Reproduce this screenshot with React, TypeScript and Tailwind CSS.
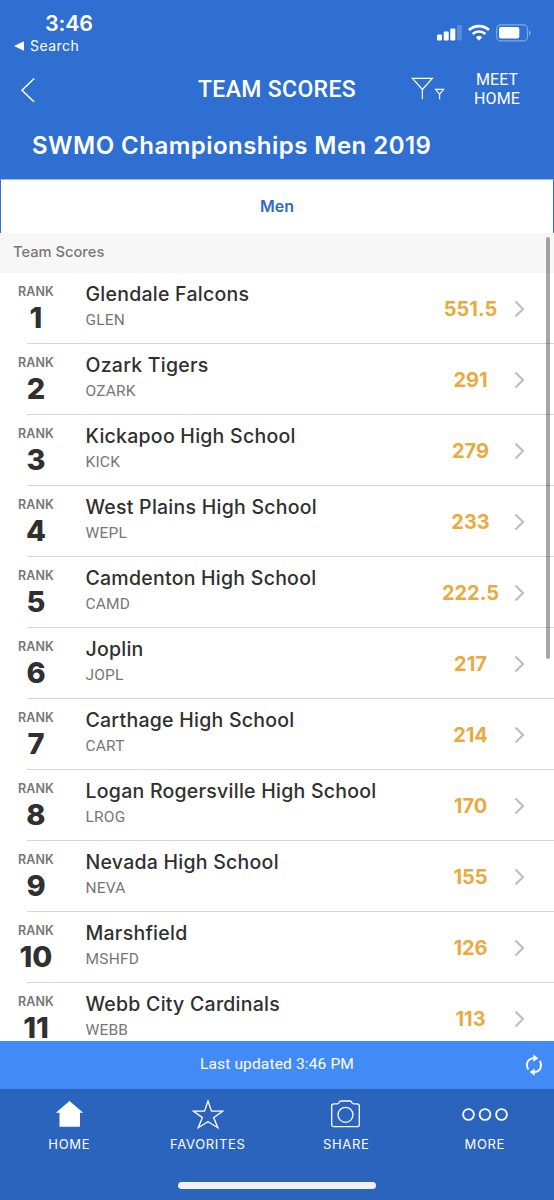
const teams = [
  { rank: 1, name: "Glendale Falcons", code: "GLEN", score: "551.5" },
  { rank: 2, name: "Ozark Tigers", code: "OZARK", score: "291" },
  { rank: 3, name: "Kickapoo High School", code: "KICK", score: "279" },
  { rank: 4, name: "West Plains High School", code: "WEPL", score: "233" },
  { rank: 5, name: "Camdenton High School", code: "CAMD", score: "222.5" },
  { rank: 6, name: "Joplin", code: "JOPL", score: "217" },
  { rank: 7, name: "Carthage High School", code: "CART", score: "214" },
  { rank: 8, name: "Logan Rogersville High School", code: "LROG", score: "170" },
  { rank: 9, name: "Nevada High School", code: "NEVA", score: "155" },
  { rank: 10, name: "Marshfield", code: "MSHFD", score: "126" },
  { rank: 11, name: "Webb City Cardinals", code: "WEBB", score: "113" },
];

const StatusIcons = () => (
  <svg width="94" height="18" viewBox="0 0 94 18" fill="none">
    <rect x="0" y="10.5" width="5" height="6" rx="1" fill="#fff" />
    <rect x="6.7" y="7.5" width="5" height="9" rx="1" fill="#fff" />
    <rect x="13.3" y="4.5" width="5" height="12" rx="1" fill="#fff" />
    <rect x="20" y="1" width="5" height="15.5" rx="1" fill="#fff" opacity="0.2" />
    <path d="M32 6.1a14.4 14.4 0 0 1 20 0" stroke="#fff" strokeWidth="2.8" />
    <path d="M35.7 10a9 9 0 0 1 12.6 0" stroke="#fff" strokeWidth="2.5" />
    <path d="M38.7 13.2a4.8 4.8 0 0 1 6.6 0L42 16.8z" fill="#fff" />
    <rect x="59.7" y="0.9" width="30.8" height="16" rx="4" stroke="#fff" strokeOpacity="0.4" strokeWidth="1.2" />
    <rect x="62" y="3" width="20.3" height="11.5" rx="2" fill="#fff" />
    <path d="M92 6.5c2.4.8 2.4 4.2 0 5z" fill="#fff" opacity="0.4" />
  </svg>
);

const Header = () => (
  <header className="h-[179px] shrink-0 bg-[#2e6fd1] text-white">
    <div className="flex h-[58px] justify-between pr-[23px] pl-[14px]">
      <div className="pt-[11px]">
        <p className="pl-[31px] font-[Inter,sans-serif] text-[21.5px] leading-6 font-semibold tracking-[-0.2px]">3:46</p>
        <div className="mt-0.5 flex items-center gap-[6px]">
          <svg width="10" height="10" viewBox="0 0 10 10" fill="#fff">
            <path d="M0 5 10 .2v9.6z" />
          </svg>
          <span className="font-[Inter,sans-serif] text-sm leading-[18px] tracking-[0.45px]">Search</span>
        </div>
      </div>
      <div className="pt-6">
        <StatusIcons />
      </div>
    </div>

    <div className="grid h-[61px] grid-cols-[1fr_auto_1fr] items-center">
      <svg className="mt-0.5 ml-5" width="16" height="26" viewBox="0 0 16 26" fill="none" stroke="#fff" strokeWidth="1.5">
        <path d="M14.2 1.5 2 13.3 14.2 25" />
      </svg>
      <h1 className="mt-0.5 font-[Roboto,sans-serif] text-[23px] leading-7 font-medium tracking-[0.35px]">TEAM SCORES</h1>
      <div className="flex items-center justify-end gap-[29px] pr-[34px]">
        <svg width="34" height="24" viewBox="0 0 34 24" fill="none" stroke="#fff" strokeWidth="1.2">
          <path d="M1.5 1.3h19.8l-9.9 11.2zM11.4 12v10" />
          <path d="M24.7 12.3h7.8l-3.9 5zM28.6 17v5.2" />
        </svg>
        <div className="mt-px text-center font-[Roboto,sans-serif] text-base leading-[19px] tracking-[0.1px]">
          <p>MEET</p>
          <p>HOME</p>
        </div>
      </div>
    </div>

    <h2 className="pt-3 pl-8 font-[Inter,sans-serif] text-2xl leading-[30px] font-semibold tracking-[0.47px]">SWMO Championships Men 2019</h2>
  </header>
);

const TeamRow = ({ rank, name, code, score }: (typeof teams)[number]) => (
  <li className="shrink-0">
    <div className="flex h-[70px]">
      <div className="w-[72px] shrink-0 pt-[11px] text-center">
        <p className="font-[Inter,sans-serif] text-[12.5px] leading-4 font-semibold tracking-[0.1px] text-[#777]">RANK</p>
        <p className="mt-[5px] font-[Inter,sans-serif] text-[29px] leading-[26px] font-extrabold text-[#303030]">{rank}</p>
      </div>
      <div className="flex-1 pt-[9px] pl-[13.5px]">
        <p className="font-[Inter,sans-serif] text-[19.5px] leading-6 font-medium tracking-[0.25px] whitespace-nowrap text-[#303030]">
          {name}
        </p>
        <p className="mt-1 font-[Roboto,sans-serif] text-[15.5px] leading-5 tracking-[0.2px] text-[#777]">{code}</p>
      </div>
      <p className="w-20 pt-px pl-px text-center font-[Inter,sans-serif] text-xl leading-[70px] font-bold text-[#e9ab40]">{score}</p>
      <svg className="mt-[27px] mr-[28px] ml-1" width="12" height="18" viewBox="0 0 12 18" fill="none" stroke="#bfbfc3" strokeWidth="2.2">
        <path d="m1.5 1.5 7.5 7.5-7.5 7.5" />
      </svg>
    </div>
    <div className="ml-[27px] h-px bg-[#d6d6d6]" />
  </li>
);

const TabBar = () => (
  <nav className="grid h-[93px] grid-cols-4 pt-[10px] text-center font-[Inter,sans-serif] text-[13px] leading-4 tracking-[0.65px]">
    <div className="flex flex-col items-center gap-[6px]">
      <svg width="32" height="31" viewBox="0 0 32 31" fill="#fff">
        <path d="M16.5 2 30.2 13.8H27v14H6.5v-14H2.8z" />
      </svg>
      <span>HOME</span>
    </div>
    <div className="flex flex-col items-center gap-[6px]">
      <svg width="32" height="31" viewBox="0 0 32 31" fill="none" stroke="#fff" strokeWidth="1.3">
        <path d="m16 2 3.5 10.2h11l-8.9 6.4 4.3 10.1-9.9-6-9.8 6 4.2-10.1-8.9-6.4h11z" />
      </svg>
      <span>FAVORITES</span>
    </div>
    <div className="flex flex-col items-center gap-[6px]">
      <svg width="32" height="31" viewBox="0 0 32 31" fill="none" stroke="#fff" strokeWidth="1.3">
        <path d="M4 4.8h3c1.8 0 1.8-.3 2.3-1.5.3-1 .9-1.3 1.8-1.3h8.8c.9 0 1.5.3 1.8 1.3.5 1.2.5 1.5 2.3 1.5h3c1.4 0 2.3.8 2.3 2.2v18.5c0 1.4-.9 2.2-2.3 2.2H4c-1.4 0-2.3-.8-2.3-2.2V7c0-1.400.9-2.200 2.300-2.200z" />
        <circle cx="15.5" cy="15.8" r="7.5" />
      </svg>
      <span>SHARE</span>
    </div>
    <div className="flex flex-col items-center gap-[6px]">
      <svg width="48" height="31" viewBox="0 0 48 31" fill="none" stroke="#fff" strokeWidth="1.8">
        <circle cx="7.5" cy="15.5" r="5.4" />
        <circle cx="24" cy="15.5" r="5.4" />
        <circle cx="40.5" cy="15.5" r="5.4" />
      </svg>
      <span>MORE</span>
    </div>
  </nav>
);

const App = () => {
  return (
    <div className="relative flex h-[1200px] w-[554px] flex-col overflow-hidden bg-white">
      <Header />

      <div className="flex h-[54px] shrink-0 items-center justify-center border-x border-t border-[#2e6fd1] border-t-[#9bbcf0] pb-0.5 font-[Inter,sans-serif] text-base font-semibold text-[#2e6bc7]">
        Men
      </div>
      <div className="h-10 shrink-0 bg-[#f7f7f7] pl-[13px] font-[Inter,sans-serif] text-[14.7px] leading-[38px] font-medium text-[#777]">
        Team Scores
      </div>

      {/* results */}
      <ul className="flex h-[768px] shrink-0 flex-col overflow-hidden">
        {teams.map((team) => (
          <TeamRow key={team.rank} {...team} />
        ))}
      </ul>
      <div className="absolute top-[237px] left-[546px] h-[422px] w-1 rounded-full bg-black/35" />

      {/* refresh */}
      <div className="grid h-12 shrink-0 grid-cols-[1fr_auto_1fr] items-center bg-[#428bf7] font-[Roboto,sans-serif] text-[15.5px] tracking-[0.15px] text-white">
        <span />
        <span>Last updated 3:46 PM</span>
        <svg className="mr-[10px] justify-self-end" width="20" height="22" viewBox="0 0 20 22" fill="none" stroke="#fff" strokeWidth="1.9">
          <path d="M4.4 15.5C1.2 11 3.2 4.2 10.5 4.1M15.6 6.7C18.8 11.2 16.8 18 9.5 18.1" />
          <path d="m9.3.6 5 3.6-5 3.6zM10.7 14.5l-5 3.6 5 3.6z" fill="#fff" stroke="none" />
        </svg>
      </div>

      <footer className="h-[111px] shrink-0 bg-[#2a64bd] text-white">
        <TabBar />
        <div className="mx-auto h-[7px] w-[198px] rounded-full bg-[#f2f2f2]" />
      </footer>
    </div>
  );
};

export default App;
